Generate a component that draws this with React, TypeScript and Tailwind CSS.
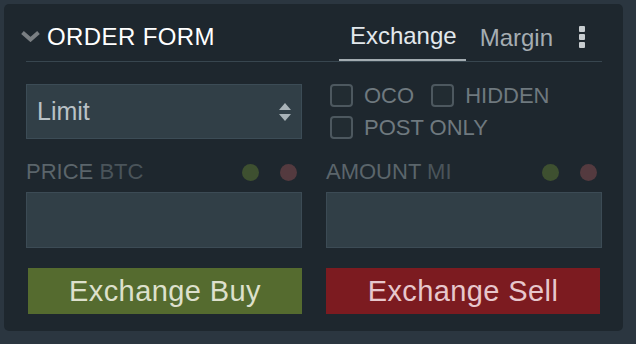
import React from "react";

const Checkbox = ({ label, className = "" }: { label: string; className?: string }) => (
  <label className={`flex items-center h-[23px] ${className}`}>
    <span className="w-[23px] h-[23px] rounded-[4px] border-2 border-[#4d585f] bg-[#222c32]" />
    <span className="ml-[11px] text-[22px] leading-none text-[#6f797f]">{label}</span>
  </label>
);

const FieldLabel = ({ name, unit }: { name: string; unit: string }) => (
  <div className="flex items-center justify-between h-[26px] mt-[20px]">
    <span className="text-[22px] leading-none text-[#5b656b]">
      {name} <span className="text-[#4a545a]">{unit}</span>
    </span>
    <div className="flex items-center gap-[21px] mr-[5px]">
      <span className="w-[17px] h-[17px] rounded-full bg-[#3e5030]" />
      <span className="w-[17px] h-[17px] rounded-full bg-[#543a3f]" />
    </div>
  </div>
);

export default function App() {
  return (
    <div
      className="w-[636px] h-[344px] bg-[#2b3640] pt-[4px] pl-[4px]"
      style={{ fontFamily: '"Liberation Sans", Arial, sans-serif' }}
    >
      <div className="w-[619px] h-[327px] rounded-[5px] bg-[#1e272e] pl-[22px] pr-[21px]">
        {/* Header */}
        <div className="flex items-stretch h-[58px] border-b border-[#38464f]">
          <div className="flex items-center pt-[8px] -ml-[6px]">
            <svg width="21" height="12" viewBox="0 0 21 12" className="mt-[-1px]">
              <path d="M2.5 2.5 L10.5 9.5 L18.5 2.5" fill="none" stroke="#7a7f83" strokeWidth="4" />
            </svg>
            <span className="ml-[6px] text-[24px] leading-none tracking-[0.4px] text-white">ORDER FORM</span>
          </div>
          <div className="ml-auto flex items-stretch">
            <div className="flex items-center pt-[8px] pl-[11px] pr-[9px] border-b-2 border-[#a3acb1] text-[24px] leading-none text-[#e2e8ec]">
              Exchange
            </div>
            <div className="flex items-center pt-[10px] ml-[4px] px-[10px] text-[24px] leading-none text-[#a5adb2]">
              Margin
            </div>
            <div className="flex flex-col justify-center gap-[2px] pt-[8px] ml-[16px] mr-[17px]">
              <span className="w-[6px] h-[6px] rounded-[1px] bg-[#c8cdd0]" />
              <span className="w-[6px] h-[6px] rounded-[1px] bg-[#c8cdd0]" />
              <span className="w-[6px] h-[6px] rounded-[1px] bg-[#c8cdd0]" />
            </div>
          </div>
        </div>

        {/* Body */}
        <div className="grid grid-cols-2 gap-x-[24px] mt-[22px]">
          <div>
            <div className="h-[55px] bg-[#313f47] border border-[#3c4c56] flex items-center justify-between pl-[10px] pr-[10px]">
              <span className="text-[25px] leading-none text-[#b9c1c5]">Limit</span>
              <svg width="12" height="18" viewBox="0 0 12 18">
                <path d="M6 0 L12 7 L0 7 Z" fill="#a9b3b8" />
                <path d="M0 11 L12 11 L6 18 Z" fill="#a9b3b8" />
              </svg>
            </div>
            <FieldLabel name="PRICE" unit="BTC" />
            <div className="h-[56px] mt-[7px] bg-[#313f47] border border-[#3c4b55]" />
            <button className="w-[274px] h-[46px] mt-[20px] ml-[2px] bg-[#556b2f] text-[29px] leading-none tracking-[0.4px] text-[#dde0cc]">
              Exchange Buy
            </button>
          </div>
          <div>
            <div className="h-[55px] pl-[4px] flex flex-col gap-[9px]">
              <div className="flex items-center">
                <Checkbox label="OCO" />
                <Checkbox label="HIDDEN" className="ml-[17px]" />
              </div>
              <Checkbox label="POST ONLY" />
            </div>
            <FieldLabel name="AMOUNT" unit="MI" />
            <div className="h-[56px] mt-[7px] bg-[#313f47] border border-[#3c4b55]" />
            <button className="w-[274px] h-[46px] mt-[20px] bg-[#7c1b20] text-[29px] leading-none tracking-[0.4px] text-[#e7c7cc]">
              Exchange Sell
            </button>
          </div>
        </div>
      </div>
    </div>
  );
}
